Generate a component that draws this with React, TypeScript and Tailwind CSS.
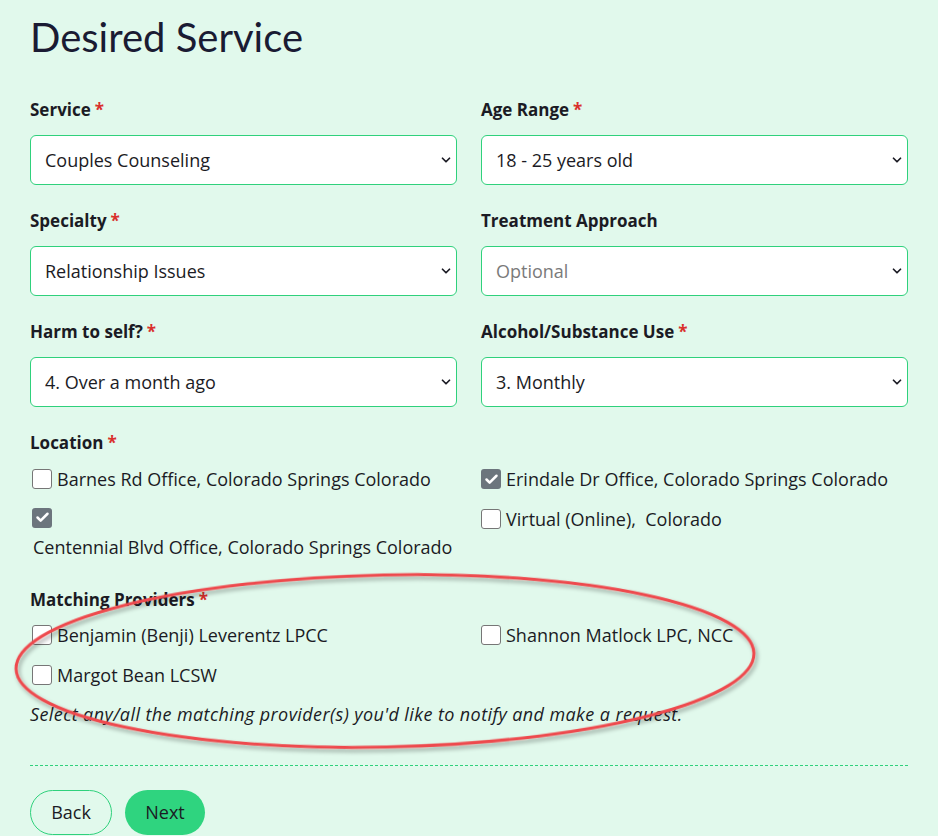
import { ChevronDown, Check } from 'lucide-react'

const font = { fontFamily: '"Open Sans", Lato, sans-serif' }

function Label({ text, required }: { text: string; required?: boolean }) {
  return (
    <div className="text-[17px] font-bold text-[#1b1b24] leading-6">
      {text}
      {required && <span className="ml-1 text-[#d9302c]">*</span>}
    </div>
  )
}

function Select({ value, placeholder }: { value: string; placeholder?: boolean }) {
  return (
    <div className="relative mt-[13px]">
      <select
        className={`w-full h-[50px] appearance-none rounded-[6px] border border-[#2fd17c] bg-white pl-[14px] pr-8 text-[18px] outline-none ${placeholder ? 'text-[#7a7a7a]' : 'text-[#1b1b24]'}`}
        defaultValue={value}
      >
        <option>{value}</option>
      </select>
      <ChevronDown className="pointer-events-none absolute right-[4px] top-[18px] h-[14px] w-[14px] text-[#1b1b24]" strokeWidth={3} />
    </div>
  )
}

function Box({ checked }: { checked?: boolean }) {
  return checked ? (
    <span className="inline-flex h-[20px] w-[20px] shrink-0 items-center justify-center rounded-[3px] bg-[#6c757d]">
      <Check className="h-[15px] w-[15px] text-white" strokeWidth={4} />
    </span>
  ) : (
    <span className="inline-block h-[20px] w-[20px] shrink-0 rounded-[3px] border border-[#767676] bg-white" />
  )
}

function CheckItem({ text, checked }: { text: string; checked?: boolean }) {
  return (
    <label className="flex items-center gap-[5px] text-[18px] text-[#1b1b24] leading-6">
      <Box checked={checked} />
      <span className="whitespace-pre">{text}</span>
    </label>
  )
}

export default function App() {
  return (
    <div className="relative min-h-[836px] bg-[#e1f9ec] overflow-hidden" style={font}>
      <div className="w-[878px] ml-[30px]">
        <h1 className="pt-[13px] text-[40px] leading-[48px] font-normal text-[#1a1b33]" style={{ fontFamily: 'Lato, sans-serif' }}>Desired Service</h1>

        <div className="mt-[37px] grid grid-cols-2 gap-x-[24px] gap-y-[24px]">
          <div>
            <Label text="Service" required />
            <Select value="Couples Counseling" />
          </div>
          <div>
            <Label text="Age Range" required />
            <Select value="18 - 25 years old" />
          </div>
          <div>
            <Label text="Specialty" required />
            <Select value="Relationship Issues" />
          </div>
          <div>
            <Label text="Treatment Approach" />
            <Select value="Optional" placeholder />
          </div>
          <div>
            <Label text="Harm to self?" required />
            <Select value="4. Over a month ago" />
          </div>
          <div>
            <Label text="Alcohol/Substance Use" required />
            <Select value="3. Monthly" />
          </div>
        </div>

        <div className="mt-[24px]">
          <Label text="Location" required />
          <div className="mt-[12px] grid grid-cols-2 gap-x-[24px]">
            <div className="flex flex-col gap-[16px]">
              <div className="pl-[2px]">
                <CheckItem text="Barnes Rd Office, Colorado Springs Colorado" />
              </div>
              <div className="pl-[2px]">
                <Box checked />
                <div className="mt-[4px] pl-[1px] text-[18px] leading-6 text-[#1b1b24]">Centennial Blvd Office, Colorado Springs Colorado</div>
              </div>
            </div>
            <div className="flex flex-col gap-[16px]">
              <CheckItem text="Erindale Dr Office, Colorado Springs Colorado" checked />
              <CheckItem text="Virtual (Online),  Colorado" />
            </div>
          </div>
        </div>

        <div className="mt-[29px]">
          <Label text="Matching Providers" required />
          <div className="mt-[11px] grid grid-cols-2 gap-x-[24px]">
            <div className="flex flex-col gap-[16px] pl-[2px]">
              <CheckItem text="Benjamin (Benji) Leverentz LPCC" />
              <CheckItem text="Margot Bean LCSW" />
            </div>
            <div>
              <CheckItem text="Shannon Matlock LPC, NCC" />
            </div>
          </div>
          <p className="mt-[15px] text-[18px] italic leading-6 tracking-[0.4px] text-[#1b1b24]">
            Select any/all the matching provider(s) you'd like to notify and make a request.
          </p>
        </div>

        <div className="mt-[39px] border-t border-dashed border-[#2fd17c]" />

        <div className="mt-[24px] flex gap-[13px]">
          <button className="h-[45px] w-[82px] rounded-full border border-[#2fd17c] text-[18px] text-[#1b1b24]">Back</button>
          <button className="h-[45px] w-[80px] rounded-full bg-[#2fd47f] text-[18px] text-[#1b1b24]">Next</button>
        </div>
      </div>

      <svg className="pointer-events-none absolute left-0 top-0" width="938" height="836">
        <defs>
          <filter id="sh" x="-10%" y="-20%" width="120%" height="140%">
            <feDropShadow dx="2" dy="3" stdDeviation="2" floodColor="#000" floodOpacity="0.35" />
          </filter>
        </defs>
        <ellipse cx="385" cy="661" rx="369" ry="86" transform="rotate(-1.2 385 661)" fill="none" stroke="#ee4a4d" strokeWidth="3" filter="url(#sh)" />
      </svg>
    </div>
  )
}
